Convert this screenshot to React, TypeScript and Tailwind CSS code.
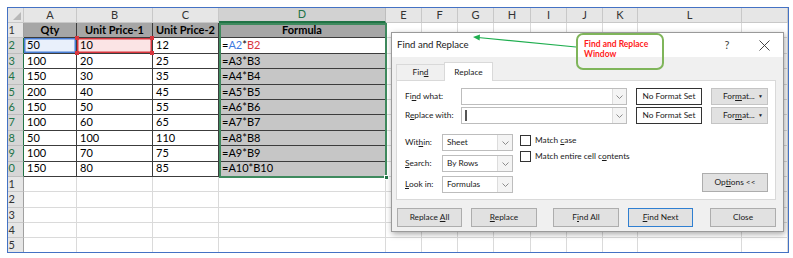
import React from 'react';

const rows: string[][] = [
  ['Qty', 'Unit Price-1', 'Unit Price-2', 'Formula'],
  ['50', '10', '12', ''],
  ['100', '20', '25', '=A3*B3'],
  ['150', '30', '35', '=A4*B4'],
  ['200', '40', '45', '=A5*B5'],
  ['150', '50', '55', '=A6*B6'],
  ['100', '60', '65', '=A7*B7'],
  ['50', '100', '110', '=A8*B8'],
  ['100', '70', '75', '=A9*B9'],
  ['150', '80', '85', '=A10*B10'],
];

const letters = ['A', 'B', 'C', 'D', 'E', 'F', 'G', 'H', 'I', 'J', 'K', 'L', ''];

function Chevron() {
  return (
    <svg width="7" height="4" viewBox="0 0 7 4">
      <path d="M0.5 0.5 L3.5 3.5 L6.5 0.5" fill="none" stroke="#808080" strokeWidth="0.9" />
    </svg>
  );
}

function ColHeader({ idx }: { idx: number }) {
  if (idx === 3) {
    return (
      <div className="bg-[#d2d2d2] border-r border-b-2 border-r-[#bdbdbd] border-b-[#217346] text-[#217346] flex items-center justify-center">
        D
      </div>
    );
  }
  return (
    <div className="bg-[#e6e6e6] border-r border-b border-[#c8c8c8] text-[#333] flex items-center justify-center">
      {letters[idx]}
    </div>
  );
}

function RowHeader({ r }: { r: number }) {
  const hl = r >= 2 && r <= 10;
  return (
    <div
      className={
        hl
          ? 'bg-[#d6d6d6] border-b border-r border-b-[#bdbdbd] border-r-[#217346] text-[#217346] overflow-hidden flex items-center justify-end pr-[8px]'
          : 'bg-[#e6e6e6] border-b border-r border-b-[#c8c8c8] border-r-[#a0a0a0] text-[#333] overflow-hidden flex items-center justify-end pr-[8px]'
      }
    >
      <span className="shrink-0">{r}</span>
    </div>
  );
}

function Handle({ pos }: { pos: string }) {
  return <span className={`absolute w-[4px] h-[4px] bg-[#d9363e] ${pos}`} />;
}

function SheetCell({ r, c }: { r: number; c: number }) {
  if (r <= 10 && c <= 3) {
    const val = rows[r - 1][c];
    if (r === 1) {
      return (
        <div className="bg-[#a6a6a6] border-r border-b border-[#3c3c3c] font-bold flex items-center justify-center">
          {val}
        </div>
      );
    }
    if (r === 2 && c === 0) {
      return (
        <div className="bg-[#e9f0fb] border-r border-b border-[#3c3c3c] shadow-[inset_0_0_0_1.5px_#4a7fd6] flex items-center pl-[3px]">
          {val}
        </div>
      );
    }
    if (r === 2 && c === 1) {
      return (
        <div className="relative bg-[#fbe4e5] border-r border-b border-[#3c3c3c] shadow-[inset_0_0_0_1.5px_#d9363e] flex items-center pl-[3px]">
          {val}
          <Handle pos="-left-[2px] -top-[2px]" />
          <Handle pos="-right-[2px] -top-[2px]" />
          <Handle pos="-left-[2px] -bottom-[2px]" />
          <Handle pos="-right-[2px] -bottom-[2px]" />
        </div>
      );
    }
    if (r === 2 && c === 3) {
      return (
        <div className="bg-white border-r border-b border-[#3c3c3c] flex items-center pl-[3px]">
          <span>
            =<span className="text-[#3f7be0]">A2</span>*<span className="text-[#d9363e]">B2</span>
          </span>
        </div>
      );
    }
    if (c === 3) {
      return (
        <div className="bg-[#c6c6c6] border-r border-b border-[#3c3c3c] flex items-center pl-[3px]">{val}</div>
      );
    }
    return <div className="bg-white border-r border-b border-[#3c3c3c] flex items-center pl-[3px]">{val}</div>;
  }
  return <div className="border-r border-b border-[#dadada]" />;
}

function Btn({ w, children, primary }: { w: string; children: React.ReactNode; primary?: boolean }) {
  return (
    <div
      className={
        primary
          ? `${w} h-[19px] bg-[#e1e1e1] border border-[#2f7fd1] flex items-center justify-center`
          : `${w} h-[19px] bg-[#e1e1e1] border border-[#adadad] flex items-center justify-center`
      }
    >
      <span className="whitespace-pre">{children}</span>
    </div>
  );
}

function ComboInput({ cursor }: { cursor?: boolean }) {
  return (
    <div className="w-[166px] h-[17px] bg-white border border-[#bdbdbd] flex">
      <div className="flex-1 flex items-center pl-[3px]">
        {cursor && <span className="w-[2px] h-[11px] bg-[#555]" />}
      </div>
      <div className="w-[14px] border-l border-[#dcdcdc] bg-[#f4f4f4] flex items-center justify-center">
        <Chevron />
      </div>
    </div>
  );
}

function SelectBox({ value }: { value: string }) {
  return (
    <div className="w-[71px] h-[17px] bg-white border border-[#bdbdbd] flex">
      <div className="flex-1 flex items-center pl-[4px]">{value}</div>
      <div className="w-[15px] border-l border-[#dcdcdc] bg-[#f4f4f4] flex items-center justify-center">
        <Chevron />
      </div>
    </div>
  );
}

function FormatBtn() {
  return (
    <div className="w-[57px] h-[17px] bg-[#e1e1e1] border border-[#c4c4c4] flex items-center pl-[11px]">
      <span>
        For<u>m</u>at...
      </span>
      <span className="ml-auto mr-[4px] text-[5px]">▼</span>
    </div>
  );
}

function Dialog() {
  return (
    <div className="absolute left-[383px] top-[24px] w-[393px] h-[200px] bg-[#f0f0f0] border border-[#9a9a9a] shadow-[1px_2px_6px_rgba(0,0,0,0.35)] flex flex-col font-['Lato',sans-serif] text-[8.3px] text-[#1a1a1a]">
      <div className="h-[24px] bg-white flex items-center pl-[5px] pr-[13px]">
        <span className="text-[9.6px]">Find and Replace</span>
        <span className="ml-auto w-[10px] text-center text-[11px] text-[#444]">?</span>
        <div className="ml-[26px] w-[12px] flex items-center justify-center">
          <svg width="11" height="11" viewBox="0 0 11 11">
            <path d="M0.5 0.5 L10.5 10.5 M10.5 0.5 L0.5 10.5" stroke="#333" strokeWidth="0.9" />
          </svg>
        </div>
      </div>
      <div className="flex pl-[4px] mt-[5px] h-[18px] items-end">
        <div className="w-[48px] h-[16px] bg-[#f0f0f0] border-t border-l border-[#d9d9d9] flex items-center justify-center">
          <span>
            Fin<u>d</u>
          </span>
        </div>
        <div className="w-[49px] h-[19px] -mb-px bg-white border-t border-l border-r border-[#d9d9d9] flex items-center justify-center relative z-10">
          Replace
        </div>
      </div>
      <div className="ml-[4px] w-[380px] h-[120px] bg-white border border-[#d9d9d9] flex flex-col pt-[7px] pl-[8px] pr-[7px]">
        <div className="flex items-center h-[17px]">
          <div className="w-[56px]">
            Fi<u>n</u>d what:
          </div>
          <ComboInput />
          <div className="ml-[9px] w-[66px] h-[17px] bg-white border border-[#333] flex items-center justify-center">
            No Format Set
          </div>
          <div className="ml-[9px]">
            <FormatBtn />
          </div>
        </div>
        <div className="flex items-center h-[17px] mt-[2px]">
          <div className="w-[56px]">
            R<u>e</u>place with:
          </div>
          <ComboInput cursor />
          <div className="ml-[9px] w-[66px] h-[17px] bg-white border border-[#333] flex items-center justify-center">
            No Format Set
          </div>
          <div className="ml-[9px]">
            <FormatBtn />
          </div>
        </div>
        <div className="flex mt-[10px]">
          <div className="flex flex-col gap-[4px]">
            <div className="flex items-center h-[17px]">
              <div className="w-[37px]">
                Wit<u>h</u>in:
              </div>
              <SelectBox value="Sheet" />
            </div>
            <div className="flex items-center h-[17px]">
              <div className="w-[37px]">
                <u>S</u>earch:
              </div>
              <SelectBox value="By Rows" />
            </div>
            <div className="flex items-center h-[17px]">
              <div className="w-[37px]">
                <u>L</u>ook in:
              </div>
              <SelectBox value="Formulas" />
            </div>
          </div>
          <div className="ml-[7px] pt-[1px] flex flex-col gap-[5px]">
            <div className="flex items-center h-[11px]">
              <span className="w-[11px] h-[11px] bg-white border border-[#333]" />
              <span className="ml-[4px]">
                Match <u>c</u>ase
              </span>
            </div>
            <div className="flex items-center h-[11px]">
              <span className="w-[11px] h-[11px] bg-white border border-[#333]" />
              <span className="ml-[4px]">
                Match entire cell c<u>o</u>ntents
              </span>
            </div>
          </div>
          <div className="ml-auto self-end mb-[1px]">
            <Btn w="w-[66px]">
              Op<u>t</u>ions &lt;&lt;
            </Btn>
          </div>
        </div>
      </div>
      <div className="flex mt-[8px] pl-[5px]">
        <Btn w="w-[65px]">
          Replace <u>A</u>ll
        </Btn>
        <div className="ml-[9px]">
          <Btn w="w-[66px]">
            <u>R</u>eplace
          </Btn>
        </div>
        <div className="ml-[16px]">
          <Btn w="w-[66px]">
            F<u>i</u>nd All
          </Btn>
        </div>
        <div className="ml-[9px]">
          <Btn w="w-[65px]" primary>
            <u>F</u>ind Next
          </Btn>
        </div>
        <div className="ml-[17px]">
          <Btn w="w-[66px]">Close</Btn>
        </div>
      </div>
    </div>
  );
}

export default function App() {
  const sheetRows = Array.from({ length: 15 }, (_, i) => i + 1);
  const cols = Array.from({ length: 13 }, (_, i) => i);
  return (
    <div className="w-[793px] h-[258px] bg-white pt-[7px] pl-[7px]">
      <div className="relative w-[782px] h-[246px] border border-[#4472c4] overflow-hidden bg-white font-['Lato',sans-serif] text-[11px] text-black">
        <div className="grid grid-cols-[16px_53px_76px_66px_167px_36px_36px_36px_37px_36px_36px_35px_104px_1fr] grid-rows-[15px_repeat(15,15.4px)]">
          <div className="bg-[#e6e6e6] border-r border-b border-[#c8c8c8] flex items-end justify-end p-[2px]">
            <svg width="8" height="8" viewBox="0 0 8 8">
              <path d="M8 0 L8 8 L0 8 Z" fill="#b8b8b8" />
            </svg>
          </div>
          {cols.map((c) => (
            <ColHeader key={`h${c}`} idx={c} />
          ))}
          {sheetRows.map((r) => (
            <React.Fragment key={r}>
              <RowHeader r={r} />
              {cols.map((c) => (
                <SheetCell key={`${r}-${c}`} r={r} c={c} />
              ))}
            </React.Fragment>
          ))}
        </div>

        <div className="absolute left-[211px] top-[15px] w-[168px] h-[155px] border-2 border-[#3f8a5e] pointer-events-none" />
        <div className="absolute left-[376px] top-[167px] w-[5px] h-[5px] bg-[#217346] border border-white" />

        <Dialog />

        <div className="absolute left-[568px] top-[25px] w-[88px] h-[37px] rounded-[7px] border-2 border-[#7fb55a] pl-[6px] pt-[4px] text-[#ff1a1a] font-bold text-[8.5px] leading-[10px]">
          Find and Replace
          <br />
          Window
        </div>
        <svg className="absolute left-0 top-0 pointer-events-none" width="780" height="244">
          <line x1="568" y1="39" x2="470" y2="29.5" stroke="#1fae4f" strokeWidth="1.2" />
          <path d="M465 29 L472 26.6 L471.6 32.6 Z" fill="#1fae4f" />
        </svg>
      </div>
    </div>
  );
}
